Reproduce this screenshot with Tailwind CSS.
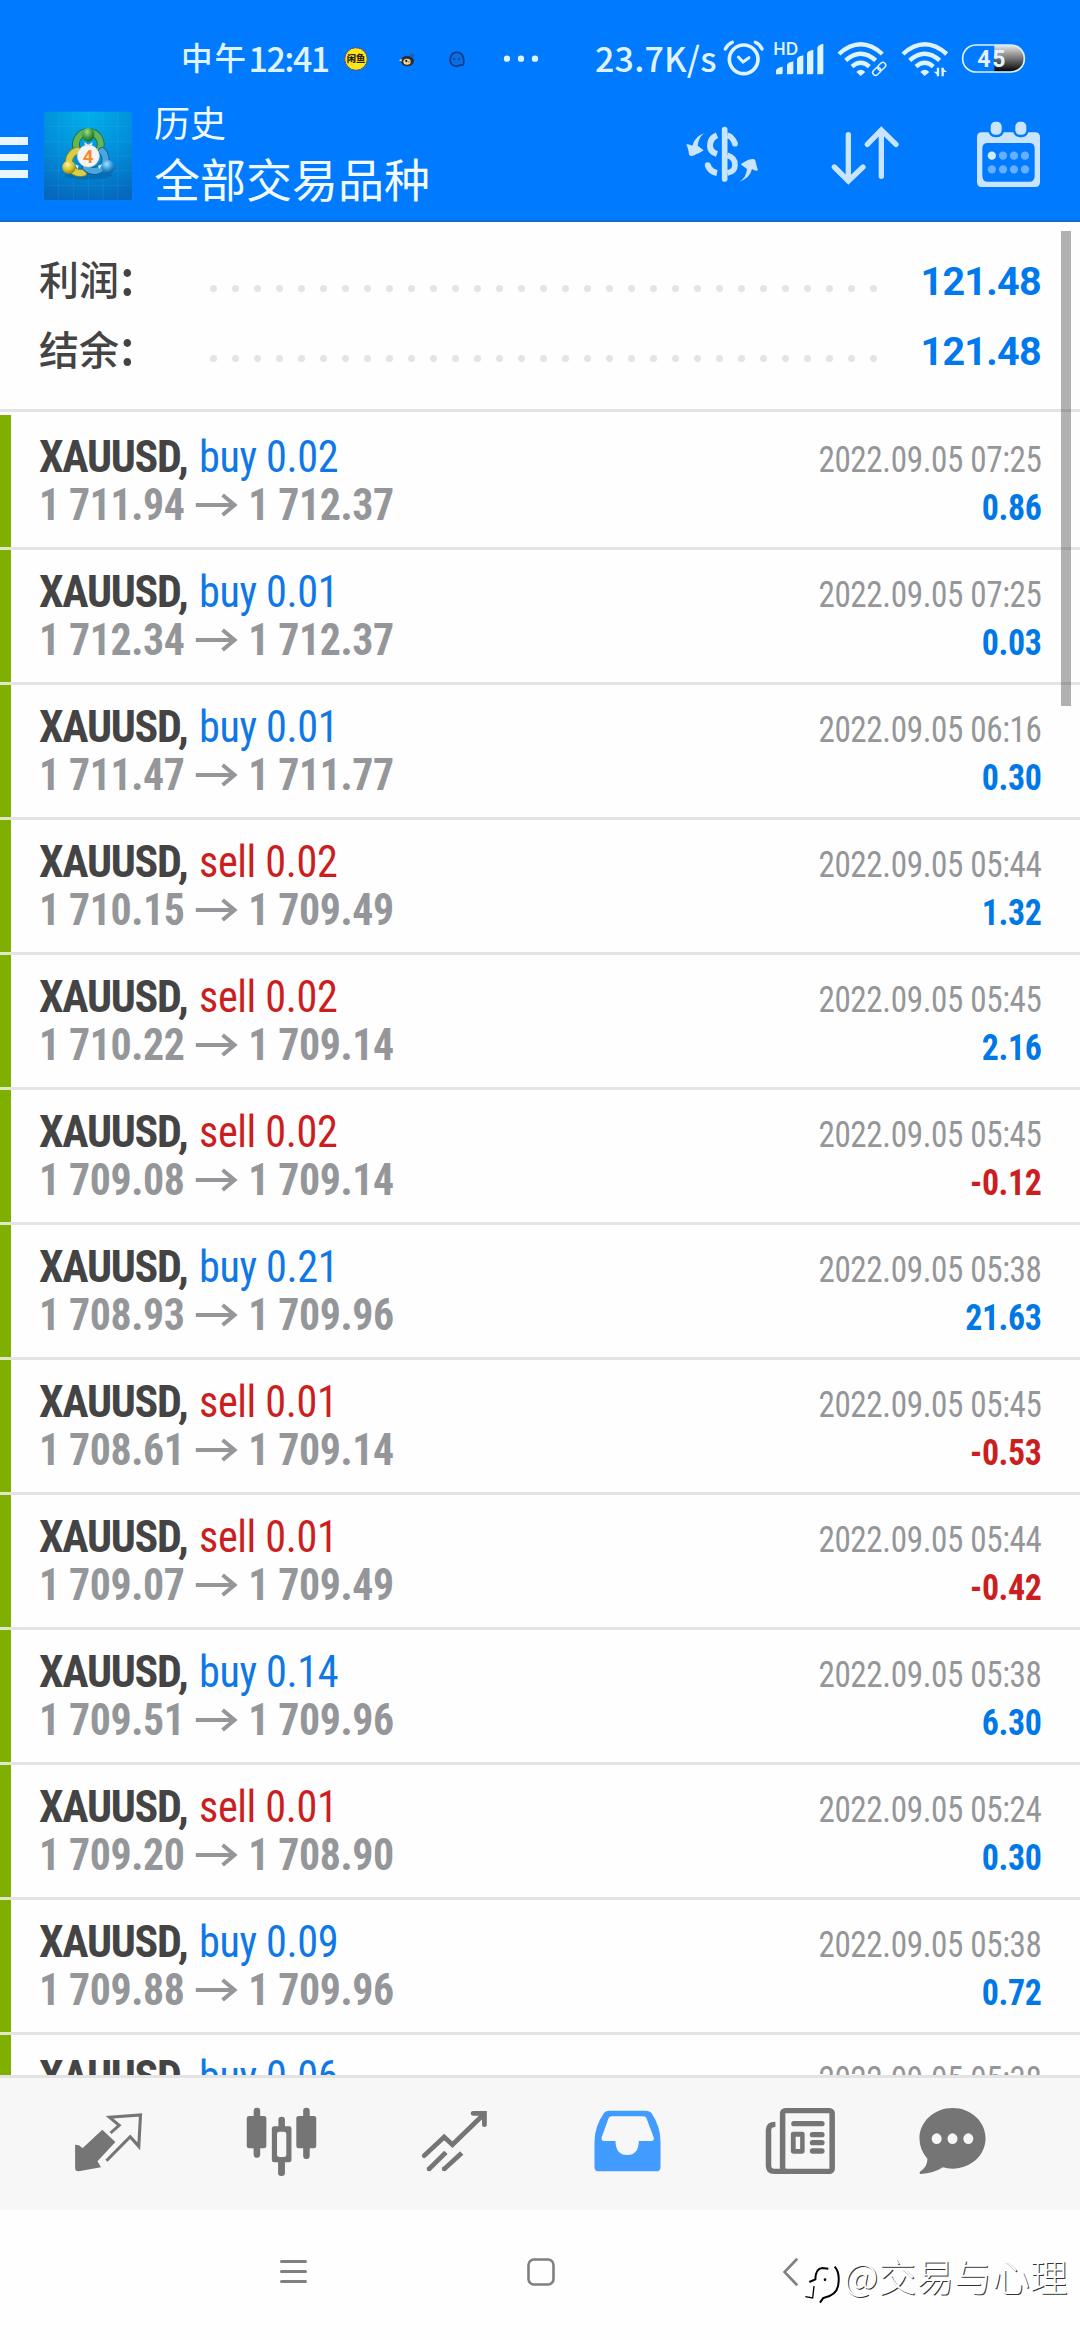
<!DOCTYPE html>
<html lang="zh">
<head>
<meta charset="utf-8">
<title>历史</title>
<script src="https://cdn.jsdelivr.net/npm/@tailwindcss/browser@4"></script>
</head>
<body class="bg-white">
<div class="relative flex h-[2340px] w-[1080px] flex-col overflow-hidden bg-[#fefefe] font-['Roboto','Noto_Sans_CJK_SC',sans-serif]">

  <header class="flex h-[222px] shrink-0 flex-col border-b-2 border-[#126bd0] bg-[#007aff]">
    <!-- status bar -->
    <div class="flex h-[80px] items-end pl-[181px] text-[#dff2ff]">
      <div class="mb-[4px] flex h-[38px] w-[162px] items-center font-['Noto_Sans_CJK_SC',sans-serif] font-medium whitespace-nowrap"><span class="w-[67.500px] text-[31.500px] tracking-[2px]">中午</span><span class="text-[34px] tracking-[-1.5px]">12:41</span></div>
      <svg class="mb-[2px] h-10 w-[26px]" viewBox="549 25 78 120"><circle cx="588" cy="88" r="34" fill="#ffe51e" stroke="#46507a" stroke-width="3"/><text x="588" y="98" text-anchor="middle" font-size="28" font-weight="900" fill="#2a2410" font-family="Noto Sans CJK SC">闲鱼</text></svg>
      <svg class="mb-[2px] ml-[28px] h-10 w-[20px]" viewBox="708 25 60 120"><ellipse cx="739" cy="94" rx="20" ry="16" fill="#2b2f38"/><ellipse cx="738" cy="96" rx="11" ry="9" fill="#ecd9a0"/><circle cx="736" cy="94" r="3.500" fill="#222"/><circle cx="743" cy="97" r="3" fill="#e49b2c"/><path d="M714 92l8-5v9z" fill="#e8dca8"/><path d="M744 80l8-7 6 10M752 73l7 4" stroke="#2c4f8c" stroke-width="3" fill="none"/></svg>
      <svg class="mb-[2px] ml-[30px] h-10 w-[20px]" viewBox="859 25 60 120"><path d="M873 104C866 96 866 72 885 68C905 66 911 82 909 102C908 108 903 107 899 106C891 111 880 110 873 104Z" fill="#0a6fe6" stroke="#123a82" stroke-width="5"/><circle cx="881" cy="88" r="3" fill="#123a82"/><circle cx="895" cy="88" r="3" fill="#123a82"/></svg>
      <svg class="mb-[2px] ml-[34px] h-10 w-[40px]" viewBox="1020 25 120 120" fill="#dff2ff"><circle cx="1038" cy="87" r="9.500"/><circle cx="1080" cy="87" r="9.500"/><circle cx="1122" cy="87" r="9.500"/></svg>
      <div class="mb-[4px] ml-[54px] flex h-[38px] w-[126px] items-center font-['Noto_Sans_CJK_SC',sans-serif] text-[34px] font-medium tracking-[0.2px] whitespace-nowrap">23.7K/s</div>
      <svg class="mb-[2px] h-10 w-[45px]" viewBox="0 25 135 120" fill="none" stroke="#dff2ff" stroke-linecap="round"><circle cx="68" cy="89" r="43" stroke-width="11"/><path d="M52 82L66 97L84 84" stroke-width="9"/><path d="M13 58Q20 44 34 38M103 38Q117 44 123 58" stroke-width="10"/></svg>
      <svg class="mb-[2px] ml-[6px] h-10 w-[54px]" viewBox="154 25 162 120" fill="#dff2ff"><text x="158" y="75" font-size="49" font-weight="700" textLength="74" lengthAdjust="spacingAndGlyphs" font-family="Lato">HD</text><path d="M166 134V122Q168 114 186 111V129Q186 134 181 134ZM199 134V107Q200 98 218 95V129Q218 134 213 134ZM229 134V89Q230 80 248 77V129Q248 134 243 134ZM259 134V72Q260 63 278 60V129Q278 134 273 134ZM290 134V55Q291 46 308 42V129Q308 134 303 134Z"/></svg>
      <svg class="mb-[2px] ml-[10px] h-10 w-[53px]" viewBox="345 25 159 120" fill="none" stroke="#dff2ff"><path d="M354 73Q419 15 484 73" stroke-width="13"/><path d="M374 92Q419 52 464 92" stroke-width="13"/><path d="M393 111Q419 88 445 111" stroke-width="13"/><path d="M406 127Q419 113 433 127L419 139Z" fill="#dff2ff" stroke="none"/><g stroke-width="4.500" transform="rotate(-45 475 118)"><rect x="451" y="109" width="27" height="17" rx="8.500"/><rect x="472" y="109" width="27" height="17" rx="8.500"/></g></svg>
      <svg class="mb-[2px] ml-[11px] h-10 w-[50px]" viewBox="537 25 150 120" fill="none" stroke="#dff2ff"><path d="M546 73Q611 15 677 73" stroke-width="13"/><path d="M566 92Q611 52 656 92" stroke-width="13"/><path d="M585 111Q611 88 637 111" stroke-width="13"/><path d="M598 127Q611 113 625 127L611 139Z" fill="#dff2ff" stroke="none"/><path d="M651 140V114M665 114V140" stroke-width="7"/><path d="M654 140L638 126H654ZM662 113L678 127H662Z" fill="#dff2ff" stroke="none"/></svg>
      <svg class="mb-[2px] ml-[11px] h-10 w-[66px]" viewBox="720 25 198 120"><defs><linearGradient id="bt" x1="0" y1="0" x2="0" y2="1"><stop offset="0" stop-color="#e8e8e8"/><stop offset="1" stop-color="#000"/></linearGradient></defs><path d="M820 47H871A38 38 0 0 1 871 126H820Z" fill="url(#bt)"/><rect x="725" y="46" width="185" height="81" rx="40" fill="none" stroke="#dff2ff" stroke-width="5"/><text x="769" y="111" font-size="69" font-weight="700" textLength="84" fill="#e6f2fb" font-family="Roboto">45</text></svg>
    </div>

    <!-- app bar -->
    <div class="flex h-[140px] items-start">
      <div class="mt-[57px] flex w-[44px] flex-col gap-[9px]">
        <i class="h-[7.7px] w-[27.500px] bg-[#eaf6ff]"></i><i class="h-[7.7px] w-[27.500px] bg-[#eaf6ff]"></i><i class="h-[7.7px] w-[27.500px] bg-[#eaf6ff]"></i>
      </div>
      <svg class="mt-[31px] size-[89px]" viewBox="42 33 267 267">
        <defs>
          <radialGradient id="bg" cx=".5" cy="0" r="1.05"><stop offset="0" stop-color="#00b0ea"/><stop offset=".5" stop-color="#0290da"/><stop offset="1" stop-color="#0567bd"/></radialGradient>
          <radialGradient id="g" cx=".4" cy=".3" r=".7"><stop offset="0" stop-color="#a5dc8c"/><stop offset=".6" stop-color="#3a9a3c"/><stop offset="1" stop-color="#176b25"/></radialGradient>
          <radialGradient id="y" cx=".4" cy=".3" r=".7"><stop offset="0" stop-color="#fff6a0"/><stop offset=".6" stop-color="#d2c02a"/><stop offset="1" stop-color="#8f8416"/></radialGradient>
          <radialGradient id="b" cx=".4" cy=".3" r=".7"><stop offset="0" stop-color="#a5e0fb"/><stop offset=".6" stop-color="#2f97d6"/><stop offset="1" stop-color="#12609f"/></radialGradient>
        </defs>
        <rect x="42" y="35" width="264" height="265" fill="url(#bg)"/>
        <path d="M86 35V300M130 35V300M175 35V300M219 35V300M263 35V300M42 80H306M42 124H306M42 168H306M42 212H306M42 257H306" stroke="#7fd4ff" stroke-opacity=".16" stroke-width="2"/>
        <ellipse cx="175" cy="226" rx="72" ry="12" fill="#03508c" opacity=".35"/>
        <g fill="none" stroke-linecap="round">
          <path d="M140 145A37 37 0 1 1 208 150" stroke="#1c6d33" stroke-width="23"/><path d="M140 145A37 37 0 1 1 208 150" stroke="#63b557" stroke-width="18"/>
          <path d="M142 152A34 34 0 1 0 160 218" stroke="#8a801c" stroke-width="23"/><path d="M142 152A34 34 0 1 0 160 218" stroke="#d9ce48" stroke-width="18"/>
          <path d="M216 153A34 34 0 1 1 168 203" stroke="#14588f" stroke-width="23"/><path d="M216 153A34 34 0 1 1 168 203" stroke="#4aa6de" stroke-width="18"/>
        </g>
        <path d="M163 126L175 134L188 126L184 145H166ZM134 193L146 197L143 208ZM216 193L204 197L208 208Z" fill="#dfeee0"/>
        <ellipse cx="175" cy="104" rx="18" ry="21" fill="url(#g)"/><circle cx="117" cy="202" r="20" fill="url(#y)"/><circle cx="234" cy="200" r="20" fill="url(#b)"/>
        <circle cx="175" cy="168" r="33" fill="#f4f4f2" stroke="#c9cdd0" stroke-width="2"/>
        <text x="174" y="188" text-anchor="middle" font-size="56" font-weight="700" font-family="Roboto" fill="#f58a2e">4</text>
      </svg>
      <div class="ml-[21px] w-[532px] font-['Noto_Sans_CJK_SC',sans-serif] text-[#f0faff]">
        <div class="mt-[20px] h-[42px] text-[36px] leading-[42px]">历史</div>
        <div class="mt-[8px] h-[54px] text-[46px] leading-[54px]">全部交易品种</div>
      </div>
      <svg class="mt-[45px] h-[60px] w-[74px]" viewBox="48 30 222 180" fill="#c9e4ff">
        <path d="M106 54Q86 62 83 92L101 106Q90 114 80 117Q70 124 62 123Q56 121 56 110Q54 100 49 88Q56 86 67 92Q75 62 106 54Z"/>
        <path d="M207 200Q228 191 231 162L212 148Q222 140 234 135Q244 131 251 132Q257 134 258 145Q260 155 264 166Q257 169 246 162Q240 190 207 200Z"/>
        <g fill="none" stroke="#c9e4ff"><path d="M164 44V192" stroke-width="17" stroke-linecap="round"/><path d="M141 61Q120 70 120 92Q120 110 141 117" stroke-width="18"/><path d="M113 150Q120 170 141 174" stroke-width="18" /><path d="M172 61Q186 63 195 86M172 121Q195 128 195 150Q195 170 172 174" stroke-width="17"/></g><circle cx="113" cy="150" r="8.500"/><circle cx="195" cy="86" r="8.500"/>
      </svg>
      <svg class="mt-[45px] ml-[70px] h-[60px] w-[70px]" viewBox="480 30 210 180" fill="none" stroke="#c9e4ff" stroke-width="16" stroke-linecap="round"><path d="M535 59V195M493 156L535 198L579 156M634 184V48M592 88L634 45L678 88"/></svg>
      <svg class="mt-[40px] ml-[75px] h-[69px] w-[67px]" viewBox="915 15 201 207"><path fill="#c9e4ff" fill-rule="evenodd" d="M935 52H1095Q1110 52 1110 67V201Q1110 216 1095 216H935Q921 216 921 201V67Q921 52 935 52ZM953 84Q937 84 937 100V182Q937 200 953 200H1078Q1094 200 1094 182V100Q1094 84 1078 84Z"/><g fill="#c9e4ff" stroke="#007aff" stroke-width="7"><rect x="958.500" y="17" width="40" height="46" rx="17"/><rect x="1032.500" y="17" width="40" height="46" rx="17"/></g><circle cx="965.500" cy="122" r="12.500" fill="#d5ebff"/><g fill="#66b0ff"><circle cx="999" cy="122" r="12.500"/><circle cx="1032" cy="122" r="12.500"/><circle cx="1065" cy="122" r="12.500"/><circle cx="965.500" cy="163" r="12.500"/><circle cx="999" cy="163" r="12.500"/><circle cx="1032" cy="163" r="12.500"/><circle cx="1065" cy="163" r="12.500"/></g></svg>
    </div>
  </header>

  <!-- totals -->
  <section id="totals" class="flex h-[193px] shrink-0 flex-col pt-[24px]"></section>

  <!-- deals -->
  <main id="deals" class="h-[1660px] shrink-0 overflow-hidden"></main>

  <!-- tabs -->
  <nav class="flex h-[135px] shrink-0 border-t-[3px] border-[#e3e3e3] bg-[#f7f7f7] pt-[26px] pl-[21.500px]">
    <div class="flex w-[173px] justify-center"><svg class="size-[75px]" viewBox="206 222 218 225" preserveAspectRatio="none"><path d="M297 299L335 336L283 394L293 412L228 424Q218 424 218 414V344Q232 344 236 352L240 354Z" fill="#757575"/><path d="M321 309L346 286L318 262L408 255L403 349L378 320L309 392" fill="none" stroke="#757575" stroke-width="9"/></svg></div>
    <div class="flex w-[173px] justify-center"><svg class="size-[75px]" viewBox="707 222 218 225" preserveAspectRatio="none" fill="#757575"><rect x="715" y="258" width="57" height="97" rx="7"/><rect x="735" y="233" width="19" height="150" rx="9"/><rect x="859" y="258" width="58" height="97" rx="7"/><rect x="879" y="233" width="19" height="154" rx="9"/><rect x="807" y="260" width="19" height="40" rx="9"/><rect x="806" y="385" width="20" height="53" rx="9"/><rect x="788" y="289" width="57" height="108" rx="7"/><rect x="803" y="305" width="27" height="76" rx="7" fill="#f7f7f7"/></svg></div>
    <div class="flex w-[173px] justify-center"><svg class="size-[75px]" viewBox="1210 222 218 225" preserveAspectRatio="none" fill="none" stroke="#757575" stroke-width="14" stroke-linecap="round"><path d="M1231 377L1289 321L1313 344L1405 252M1373 250H1406V284"/><path stroke-linecap="butt" d="M1244 418L1294 367M1288 418L1340 369"/><path d="M1245 417h.1M1289 417h.1"/></svg></div>
    <div class="flex w-[173px] justify-center"><svg class="size-[75px]" viewBox="145 222 218 225" preserveAspectRatio="none"><path fill="#429cff" fill-rule="evenodd" d="M201 242H307Q319 242 324 250Q350 290 350 335V410Q350 424 337 424H171Q158 424 158 410V335Q158 290 186 248Q191 242 201 242ZM208 259Q201 259 199 265L179 322Q176 333 187 333H219Q220 375 253 375Q286 375 287 333H323Q333 333 330 322L309 265Q307 259 300 259Z"/></svg></div>
    <div class="flex w-[173px] justify-center"><svg class="size-[75px]" viewBox="649 222 218 225" preserveAspectRatio="none"><g fill="none" stroke="#757575" stroke-width="16"><path d="M685 283Q665 283 665 300V407Q665 424 682 424H720"/><rect x="706" y="242" width="144" height="182" rx="8"/></g><g fill="#757575"><rect x="731" y="273" width="97" height="16" rx="8"/><rect x="785" y="306" width="43" height="16" rx="8"/><rect x="785" y="330" width="43" height="16" rx="8"/><rect x="785" y="355" width="43" height="16" rx="8"/><path fill-rule="evenodd" d="M738 305H763Q770 305 770 312V364Q770 371 763 371H738Q730 371 730 364V312Q730 305 738 305ZM744 320V357H757V320Z"/></g></svg></div>
    <div class="flex w-[131px] justify-center"><svg class="size-[75px]" viewBox="1090 222 218 225" preserveAspectRatio="none"><path fill="#757575" d="M1199 234C1253 234 1295 275 1295 325C1295 377 1252 416 1199 416Q1184 416 1171 412Q1145 430 1106 432Q1100 430 1106 424Q1127 408 1126 386Q1103 360 1103 325C1103 275 1146 234 1199 234Z"/><g fill="#f7f7f7"><ellipse cx="1153" cy="326" rx="14.500" ry="16"/><ellipse cx="1199" cy="326" rx="14.500" ry="16"/><ellipse cx="1245" cy="326" rx="14.500" ry="16"/></g></svg></div>
  </nav>

  <!-- system navigation -->
  <div class="flex flex-1 items-start pt-[48px] pl-[280px]">
    <svg class="h-[28px] w-[27px]" viewBox="0 0 27 28" stroke="#808080" stroke-width="3" stroke-linecap="round"><path d="M1.500 3.500h24M1.500 13.500h24M1.500 23.500h24"/></svg>
    <svg class="ml-[220px] size-[28px]" viewBox="0 0 28 28" fill="none" stroke="#808080" stroke-width="2.600"><rect x="1.500" y="1.500" width="25" height="25" rx="5.500"/></svg>
    <svg class="ml-[228px] h-[28px] w-[15px]" viewBox="0 0 15 28" fill="none" stroke="#808080" stroke-width="2.600" stroke-linecap="round"><path d="M13.500 1.500L1.500 14L13.500 26.500"/></svg>
  </div>

  <!-- watermark -->
  <div class="absolute top-[2248px] left-[804px] flex items-start text-white">
    <svg class="mt-[16px] h-[42px] w-[38px]" viewBox="42 72 114 126" fill="none" stroke="#000"><path d="M58 126L76 118Q76 86 97 84L115 86" stroke-width="6"/><path d="M72 138L68 174L46 170" stroke-width="4"/><path d="M134 80Q150 98 145 132Q142 166 100 174L90 188" stroke-width="6"/><circle cx="105" cy="119" r="4" fill="#000" stroke="none"/></svg>
    <div class="ml-[2px] flex h-[54px] items-center font-['Noto_Sans_CJK_SC',sans-serif] text-[37.500px] font-light tracking-[0.4px] whitespace-nowrap [text-shadow:1px_1px_0_#333]">@交易与心理</div>
  </div>

  <!-- scrollbar -->
  <div class="absolute top-[231px] left-[1061px] h-[475px] w-[10px] bg-black/30"></div>
</div>

<script>
const dots = Array.from({length: 31}, () => '<i class="size-[7px] rounded-full bg-[#e4e4e4]"></i>').join('');
document.getElementById('totals').innerHTML = [['利润', '121.48'], ['结余', '121.48']].map(([k, v]) => `
  <div class="flex h-[70px] items-center pl-[39px] pr-[39px]">
    <span class="mb-[5px] flex h-[65px] w-[171px] items-center font-['Noto_Sans_CJK_SC',sans-serif] text-[40px] leading-[65px] font-medium text-[#444]">${k}<span class="mb-[10px] ml-[1px] text-[49px]">:</span></span>
    <span class="mt-[15px] flex w-[667px] justify-between">${dots}</span>
    <span class="mt-[1px] flex-1 text-right text-[39.500px] leading-[70px] font-bold tracking-[-0.7px] text-[#0078ee]">${v}</span>
  </div>`).join('') + '<div class="mt-[23px] h-[3px] shrink-0 bg-[#e4e4e4]"></div>';

const arrow = '<svg class="mr-[10px] ml-[11px] h-[26px] w-[46px]" viewBox="0 0 44 26" preserveAspectRatio="none" fill="none" stroke="#949699" stroke-width="4"><path d="M1 13H41M28 3L40 13L28 23"/></svg>';
const deals = [
  ['buy 0.02', '1 711.94', '1 712.37', '2022.09.05 07:25', '0.86'],
  ['buy 0.01', '1 712.34', '1 712.37', '2022.09.05 07:25', '0.03'],
  ['buy 0.01', '1 711.47', '1 711.77', '2022.09.05 06:16', '0.30'],
  ['sell 0.02', '1 710.15', '1 709.49', '2022.09.05 05:44', '1.32'],
  ['sell 0.02', '1 710.22', '1 709.14', '2022.09.05 05:45', '2.16'],
  ['sell 0.02', '1 709.08', '1 709.14', '2022.09.05 05:45', '-0.12'],
  ['buy 0.21', '1 708.93', '1 709.96', '2022.09.05 05:38', '21.63'],
  ['sell 0.01', '1 708.61', '1 709.14', '2022.09.05 05:45', '-0.53'],
  ['sell 0.01', '1 709.07', '1 709.49', '2022.09.05 05:44', '-0.42'],
  ['buy 0.14', '1 709.51', '1 709.96', '2022.09.05 05:38', '6.30'],
  ['sell 0.01', '1 709.20', '1 708.90', '2022.09.05 05:24', '0.30'],
  ['buy 0.09', '1 709.88', '1 709.96', '2022.09.05 05:38', '0.72'],
  ['buy 0.06', '', '', '2022.09.05 05:38', '']
];
document.getElementById('deals').innerHTML = deals.map(([type, from, to, time, profit]) => `
  <div class="flex h-[135px] border-b-[3px] border-[#e4e4e4] font-['Roboto_Condensed',sans-serif]">
    <div class="h-[135px] w-[11px] shrink-0 border-b-[3px] border-[#dfe8c6] bg-[#7fb000]"></div>
    <div class="flex flex-1 justify-between pt-[18px] pr-[38px] pl-[28px]">
      <div class="text-[44px] whitespace-nowrap">
        <div class="flex h-[48px] leading-[48px]"><span class="font-bold tracking-[-1.3px] text-[#444]">XAUUSD,</span><span class="ml-[12px] origin-left scale-x-[0.96] tracking-[-0.4px] ${type[0] === 'b' ? 'text-[#0f78e6]' : 'text-[#cb1f1f]'}">${type}</span></div>
        <div class="flex h-[48px] origin-left scale-x-[0.95] items-center font-bold tracking-[-0.4px] text-[#949699]"><span>${from}</span>${from ? arrow : ''}<span>${to}</span></div>
      </div>
      <div class="text-right text-[36px] whitespace-nowrap">
        <div class="mt-[3px] h-[48px] origin-right scale-x-[0.92] leading-[48px] tracking-[-0.4px] text-[#949699]">${time}</div>
        <div class="h-[48px] origin-right scale-x-[0.94] leading-[48px] font-bold tracking-[-0.4px] ${profit[0] === '-' ? 'text-[#cb1f1f]' : 'text-[#0078e6]'}">${profit}</div>
      </div>
    </div>
  </div>`).join('');
</script>
</body>
</html>
